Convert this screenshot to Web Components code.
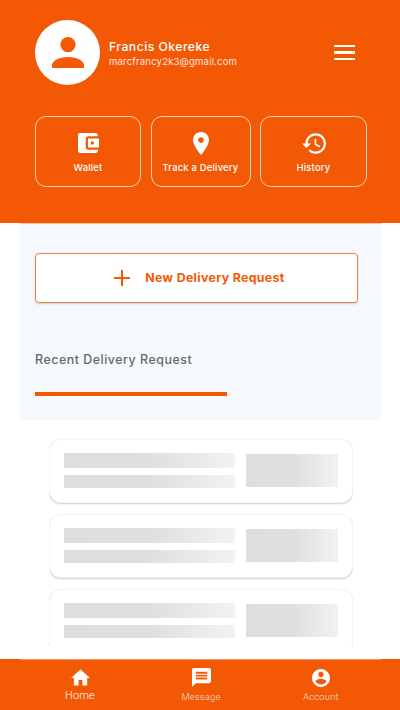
<!DOCTYPE html>
<html lang="en">
<head>
<meta charset="utf-8">
<title>Dashboard</title>
<style>
html,body{margin:0;padding:0;background:#fff}
body{font-family:Inter,"Liberation Sans",sans-serif}
</style>
</head>
<body>
<app-screen>
  <app-header name="Francis Okereke" email="marcfrancy2k3@gmail.com">
    <action-tile label="Wallet" icon="wallet"></action-tile>
    <action-tile label="Track a Delivery" icon="place"></action-tile>
    <action-tile label="History" icon="history"></action-tile>
  </app-header>
  <request-panel></request-panel>
  <skeleton-list>
    <skeleton-card></skeleton-card>
    <skeleton-card></skeleton-card>
    <skeleton-card></skeleton-card>
  </skeleton-list>
  <bottom-nav>
    <nav-item label="Home" icon="home" active></nav-item>
    <nav-item label="Message" icon="message"></nav-item>
    <nav-item label="Account" icon="account"></nav-item>
  </bottom-nav>
</app-screen>
<script>
const ICONS={
  wallet:['3 3 19 18',21,20,'M21 18v1c0 1.1-.9 2-2 2H5c-1.11 0-2-.9-2-2V5c0-1.1.89-2 2-2h14c1.1 0 2 .9 2 2v1h-9c-1.11 0-2 .9-2 2v8c0 1.1.89 2 2 2h9zm-9-2h10V8H12v8zm4-2.5c-.83 0-1.5-.67-1.5-1.5s.67-1.5 1.5-1.5 1.5.67 1.5 1.5-.67 1.5-1.5 1.5z'],
  place:['5 2 14 20',16,23,'M12 2C8.13 2 5 5.13 5 9c0 5.25 7 13 7 13s7-7.75 7-13c0-3.87-3.13-7-7-7zm0 9.5c-1.38 0-2.5-1.12-2.5-2.5s1.12-2.5 2.5-2.5 2.5 1.12 2.5 2.5-1.12 2.5-2.5 2.5z'],
  history:['1 3 21 18',24,21,'M13 3c-4.97 0-9 4.03-9 9H1l3.89 3.89.07.14L9 12H6c0-3.87 3.13-7 7-7s7 3.13 7 7-3.13 7-7 7c-1.93 0-3.68-.79-4.94-2.06l-1.42 1.42C8.27 19.99 10.51 21 13 21c4.97 0 9-4.03 9-9s-4.03-9-9-9zm-1 5v5l4.28 2.54.72-1.21-3.5-2.08V8H12z'],
  home:['2 3 20 17',19,17,'M10 20v-6h4v6h5v-8h3L12 3 2 12h3v8z'],
  message:['2 2 20 20',19,19,'M20 2H4c-1.1 0-1.99.9-1.99 2L2 22l4-4h14c1.1 0 2-.9 2-2V4c0-1.1-.9-2-2-2zm-2 12H6v-2h12v2zm0-3H6V9h12v2zm0-3H6V6h12v2z'],
  account:['2 2 20 20',18,18,'M12 2C6.48 2 2 6.48 2 12s4.48 10 10 10 10-4.48 10-10S17.52 2 12 2zm0 3c1.66 0 3 1.34 3 3s-1.34 3-3 3-3-1.34-3-3 1.34-3 3-3zm0 14.2c-2.5 0-4.71-1.28-6-3.22.03-1.99 4-3.08 6-3.08 1.99 0 5.97 1.09 6 3.08-1.29 1.94-3.5 3.22-6 3.22z']
};
const svg=n=>{const[v,w,h,d]=ICONS[n];return `<svg viewBox="${v}" width="${w}" height="${h}" fill="currentColor" aria-hidden="true"><path fill-rule="evenodd" d="${d}"/></svg>`};
function def(tag,html){
  customElements.define(tag,class extends HTMLElement{
    constructor(){super();this.attachShadow({mode:'open'})}
    connectedCallback(){
      this.shadowRoot.innerHTML=typeof html==='function'?html(this):html;
    }
  });
}
def('app-screen',`<style>:host{display:flex;flex-direction:column;width:400px;height:710px;overflow:hidden;background:#fff}</style><slot></slot>`);
def('app-header',e=>`<style>
:host{display:block;height:223px;box-sizing:border-box;padding:20px 33px 0 35px;background:#f35805;color:#fff;font-family:Inter,"Liberation Sans",sans-serif}
.top{display:flex;align-items:center;height:65px}
.avatar{width:65px;height:65px;border-radius:50%;background:#fff;color:#f35805;display:flex;align-items:center;justify-content:center;flex:none}
.who{margin-left:9px;flex:1;display:flex;flex-direction:column;gap:0;position:relative;top:1px}
.name{font-size:12.2px;font-weight:500;line-height:16px;letter-spacing:.47px}
.mail{font-size:9.6px;line-height:13px;letter-spacing:.15px;opacity:.85}
.burger{width:21px;display:flex;flex-direction:column;gap:4.2px;margin-right:12px}
.burger i{display:block;height:2.4px;background:#fff}
.tiles{display:grid;grid-template-columns:106px 100px 107px;column-gap:9.5px;margin-top:31px}
</style>
<div class="top">
  <div class="avatar"><svg width="32" height="31" viewBox="0 0 32 31" fill="currentColor"><circle cx="16" cy="7.600" r="7.600"/><path d="M0 31v-2.500C0 24 7 20 16 20s16 4 16 8.500V31z"/></svg></div>
  <div class="who"><span class="name">${e.getAttribute('name')}</span><span class="mail">${e.getAttribute('email')}</span></div>
  <div class="burger"><i></i><i></i><i></i></div>
</div>
<div class="tiles"><slot></slot></div>`);
def('action-tile',e=>`<style>
:host{display:flex;flex-direction:column;align-items:center;box-sizing:border-box;height:71px;border:1px solid #fbd0b6;border-radius:11px;color:#fff;font-family:Inter,"Liberation Sans",sans-serif}
.i{height:24px;margin-top:14px;display:flex;align-items:center;justify-content:center}
.l{margin-top:7px;font-size:9.4px;font-weight:500;line-height:12px;letter-spacing:.22px;white-space:nowrap}
</style><div class="i">${svg(e.getAttribute('icon'))}</div><div class="l">${e.getAttribute('label')}</div>`);
def('request-panel',`<style>
:host{display:block;box-sizing:border-box;height:197px;margin:0 19px 0 20px;padding:30px 23px 0 15px;background:linear-gradient(#fac6a9,#fac6a9) 0 0/100% 1px no-repeat,#f5f9fe;font-family:Inter,"Liberation Sans",sans-serif;flex:none}
.btn{box-sizing:border-box;height:50px;background:#fff;border:1px solid #ee8146;border-radius:4px;box-shadow:0 1px 2px rgba(0,0,0,.18);display:flex;align-items:center;justify-content:center;gap:15px;color:#f35805;padding-left:6px}
.btn span{font-size:12.3px;font-weight:700;letter-spacing:.36px;position:relative;top:-1px}
.t{margin-top:49px;font-size:12.4px;font-weight:500;line-height:16px;letter-spacing:.53px;color:#66676b}
.u{margin-top:24px;width:192px;height:4px;background:#f35805}
</style>
<div class="btn"><svg width="16" height="16" viewBox="0 0 16 16" fill="currentColor"><path d="M7 0h2v7h7v2H9v7H7V9H0V7h7z"/></svg><span>New Delivery Request</span></div>
<div class="t">Recent Delivery Request</div>
<div class="u"></div>`);
def('skeleton-list',`<style>
:host{display:flex;flex-direction:column;gap:11px;box-sizing:border-box;flex:none;margin:19px 47px 0 49px;height:206px;overflow:hidden}
</style><slot></slot>`);
def('skeleton-card',`<style>
:host{display:grid;grid-template-columns:171px 92px;column-gap:11px;box-sizing:border-box;flex:none;height:64px;padding:13px 14px 0;background:#fff;border-radius:12px;border:1px solid #f5f5f5;box-shadow:0 1px 2px rgba(0,0,0,.2)}
.l{display:flex;flex-direction:column;gap:7px}
.b{background:linear-gradient(90deg,#dedede 0%,#dfdfdf 50%,#f2f2f2 100%)}
.a{height:15px}.c{height:13px}
.r{height:33px;margin-top:1px;background:linear-gradient(90deg,#dedede 0%,#dfdfdf 50%,#f2f2f2 100%)}
</style><div class="l"><div class="b a"></div><div class="b c"></div></div><div class="r"></div>`);
def('bottom-nav',`<style>
:host{display:grid;grid-template-columns:160px 82px 158px;margin-top:14px;flex:none;height:51px;background:linear-gradient(#f88f58,#f88f58) 20px 0/361px 1px no-repeat,#f35805;color:#fff;font-family:Roboto,"Liberation Sans",sans-serif}
</style><slot></slot>`);
def('nav-item',e=>{const a=e.hasAttribute('active');return `<style>
:host{display:flex;flex-direction:column;align-items:center;color:#fff}
.i{height:19px;margin-top:9px;display:flex;align-items:center;justify-content:center}
.l{font-size:${a?'11px':'9.4px'};font-weight:300;line-height:14px;margin-top:${a?'2px':'3px'};opacity:${a?'1':'.8'};letter-spacing:${a?'.1px':'.2px'}}
</style><div class="i">${svg(e.getAttribute('icon'))}</div><div class="l">${e.getAttribute('label')}</div>`});
</script>
</body>
</html>
